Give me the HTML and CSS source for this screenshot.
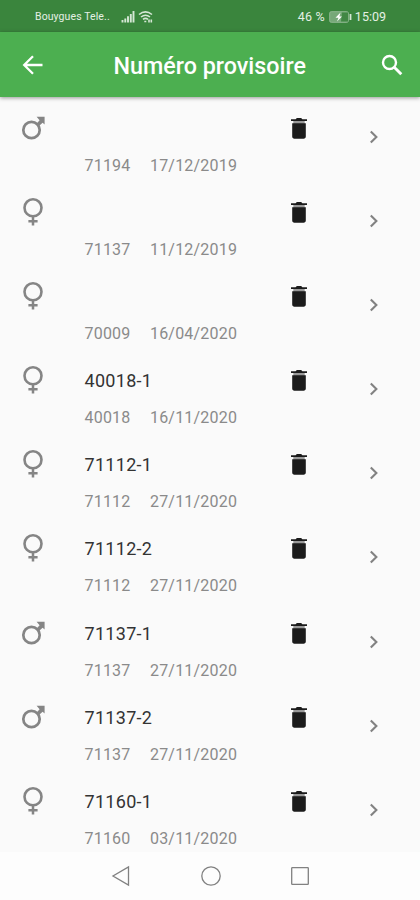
FILE: index.html
```
<!DOCTYPE html>
<html lang="fr">
<head>
<meta charset="utf-8">
<title>Numéro provisoire</title>
<link rel="stylesheet" href="styles.css">
</head>
<body>
<svg class="defs" aria-hidden="true">
  <symbol id="male" viewBox="0 0 28 32"><circle cx="12.5" cy="20" r="8.2" fill="none" stroke="#858585" stroke-width="2.7"/><path d="M17.600 6.800h8v7.600l-2-1.600-4.400 4-2.400-2.400 3.800-4.200z" fill="#858585"/></symbol>
  <symbol id="female" viewBox="0 0 28 32"><circle cx="14" cy="13.8" r="8.500" fill="none" stroke="#858585" stroke-width="2.600"/><path d="M14 22v9.6M9.4 27.2h9.2" fill="none" stroke="#858585" stroke-width="2.500"/></symbol>
  <symbol id="trash" viewBox="0 0 20 24"><path d="M4.3 4h11.4v3H4.3z" fill="#999"/><path d="M2 2.2h4.6l1.3-1.2h4.2l1.3 1.2H18v1.9H2zM3.200 6.200h13.600v13.400c0 1.300-.9 2.200-2.200 2.200H5.400c-1.300 0-2.200-.9-2.200-2.200z" fill="#1b1b1b"/></symbol>
  <symbol id="chevron" viewBox="0 0 12 16"><path d="M2.800 2.400 8.400 8l-5.600 5.600" fill="none" stroke="#828282" stroke-width="2.100"/></symbol>
</svg>
<div class="screen">
  <div class="status">
    <span class="carrier">Bouygues Tele..</span>
    <svg class="signal" width="14" height="14" viewBox="0 0 14 14"><path d="M1.500 10v2.500M4.300 8.500v4M7 6.300v6.200M9.800 4v8.500M12.500 1v11.500" stroke="#d5e7d5" stroke-width="1.900"/></svg>
    <svg class="wifi" width="15" height="14" viewBox="0 0 15 14" fill="none" stroke="#d5e7d5" stroke-width="1.600"><path d="M1 4.500Q7.500-.8 14 4.500M3 7q4.500-3.600 9 0M5 9.400q2.500-2 5 0"/><path d="M6.300 11.500h2M11 9.500v3M13.300 9.500v3"/></svg>
    <span class="percent">46 %</span>
    <svg class="battery" width="23" height="12" viewBox="0 0 23 12"><rect x=".7" y=".7" width="18.600" height="10.600" rx="1.500" fill="#76a878" stroke="#90b892"/><path d="M13 1.500h6v9h-7z" fill="#418744"/><path d="M11.500 1.500 6.500 6.700h3L8 10.600l5-5h-2.600z" fill="#fff"/><path d="M21.500 3v6" stroke="#d5e7d5" stroke-width="1.800"/></svg>
    <span class="clock">15:09</span>
  </div>
  <header class="bar">
    <svg class="back" width="22" height="22" viewBox="0 0 22 22"><path d="M20.500 11H2.800M11 2.200 2.200 11l8.800 8.800" fill="none" stroke="#fff" stroke-width="2.300"/></svg>
    <h1>Numéro provisoire</h1>
    <svg class="search" width="24" height="24" viewBox="0 0 24 24"><circle cx="9.500" cy="9.500" r="6.500" fill="none" stroke="#fff" stroke-width="2.400"/><path d="m14 14 7.300 7.300" stroke="#fff" stroke-width="2.900"/></svg>
  </header>
  <main class="list">
    <div class="row"><svg class="sex"><use href="#male"/></svg><div class="info"><div class="name"></div><div class="meta"><span>71194</span><span>17/12/2019</span></div></div><svg class="trash"><use href="#trash"/></svg><svg class="chevron"><use href="#chevron"/></svg></div>
    <div class="row"><svg class="sex"><use href="#female"/></svg><div class="info"><div class="name"></div><div class="meta"><span>71137</span><span>11/12/2019</span></div></div><svg class="trash"><use href="#trash"/></svg><svg class="chevron"><use href="#chevron"/></svg></div>
    <div class="row"><svg class="sex"><use href="#female"/></svg><div class="info"><div class="name"></div><div class="meta"><span>70009</span><span>16/04/2020</span></div></div><svg class="trash"><use href="#trash"/></svg><svg class="chevron"><use href="#chevron"/></svg></div>
    <div class="row"><svg class="sex"><use href="#female"/></svg><div class="info"><div class="name">40018-1</div><div class="meta"><span>40018</span><span>16/11/2020</span></div></div><svg class="trash"><use href="#trash"/></svg><svg class="chevron"><use href="#chevron"/></svg></div>
    <div class="row"><svg class="sex"><use href="#female"/></svg><div class="info"><div class="name">71112-1</div><div class="meta"><span>71112</span><span>27/11/2020</span></div></div><svg class="trash"><use href="#trash"/></svg><svg class="chevron"><use href="#chevron"/></svg></div>
    <div class="row"><svg class="sex"><use href="#female"/></svg><div class="info"><div class="name">71112-2</div><div class="meta"><span>71112</span><span>27/11/2020</span></div></div><svg class="trash"><use href="#trash"/></svg><svg class="chevron"><use href="#chevron"/></svg></div>
    <div class="row"><svg class="sex"><use href="#male"/></svg><div class="info"><div class="name">71137-1</div><div class="meta"><span>71137</span><span>27/11/2020</span></div></div><svg class="trash"><use href="#trash"/></svg><svg class="chevron"><use href="#chevron"/></svg></div>
    <div class="row"><svg class="sex"><use href="#male"/></svg><div class="info"><div class="name">71137-2</div><div class="meta"><span>71137</span><span>27/11/2020</span></div></div><svg class="trash"><use href="#trash"/></svg><svg class="chevron"><use href="#chevron"/></svg></div>
    <div class="row"><svg class="sex"><use href="#female"/></svg><div class="info"><div class="name">71160-1</div><div class="meta"><span>71160</span><span>03/11/2020</span></div></div><svg class="trash"><use href="#trash"/></svg><svg class="chevron"><use href="#chevron"/></svg></div>
  </main>
  <nav class="nav">
    <svg width="20" height="22" viewBox="0 0 20 22"><path d="M17.500 2v18L2 11z"/></svg>
    <svg width="22" height="22" viewBox="0 0 22 22"><circle cx="11" cy="11" r="9.200"/></svg>
    <svg width="20" height="22" viewBox="0 0 20 22"><rect x="1.700" y="2.700" width="16.600" height="16.600" rx=".6"/></svg>
  </nav>
</div>
</body>
</html>
```
FILE: styles.css
```
* { box-sizing: border-box; }
body { margin: 0; font-family: Roboto, "Liberation Sans", sans-serif; background: #fafafa; }
svg { display: block; flex: none; }
.defs { display: none; }
.screen { width: 420px; height: 900px; display: flex; flex-direction: column; overflow: hidden; }
.status { height: 32px; flex: none; display: flex; align-items: center; padding: 1px 34px 0 35px; background: #3a853d; color: #e4f0e4; white-space: nowrap; }
.carrier { width: 86px; font-size: 10.5px; letter-spacing: .1px; }
.wifi { margin-left: 3px; }
.percent { margin-left: auto; font-size: 12.5px; letter-spacing: .2px; }
.battery { margin: 0 3px 0 4px; }
.clock { font-size: 12.5px; }
.bar { height: 65px; flex: none; display: flex; align-items: center; padding: 0 16px 0 22px; background: #4caf50; box-shadow: 0 1px 4px rgba(0, 0, 0, .4); position: relative; }
.bar h1 { flex: 1; margin: 2px 0 0 69.500px; font-size: 23.300px; line-height: 28px; font-weight: 500; color: #fff; white-space: nowrap; }
.list { flex: 1; min-height: 0; overflow: hidden; padding-top: 1px; }
.row { height: 84.100px; display: flex; align-items: flex-start; padding-left: 19px; }
.sex { width: 28px; height: 32px; margin-top: 12px; }
.info { width: 204px; margin-left: 37.500px; }
.name { height: 46px; padding-top: 18px; font-size: 18px; line-height: 26px; letter-spacing: .3px; color: #333; }
.meta { display: flex; gap: 19.500px; margin-top: 10px; font-size: 16px; line-height: 24px; letter-spacing: .2px; color: #8a8a8a; }
.trash { width: 20px; height: 24px; margin: 19px 0 0; }
.chevron { width: 12px; height: 16px; margin: 31px 0 0 59px; }
.nav { height: 48px; flex: none; display: flex; align-items: center; gap: 68.500px; padding-left: 111px; background: #fdfdfd; }
.nav svg { fill: none; stroke: #818181; stroke-width: 1.300; }
```
